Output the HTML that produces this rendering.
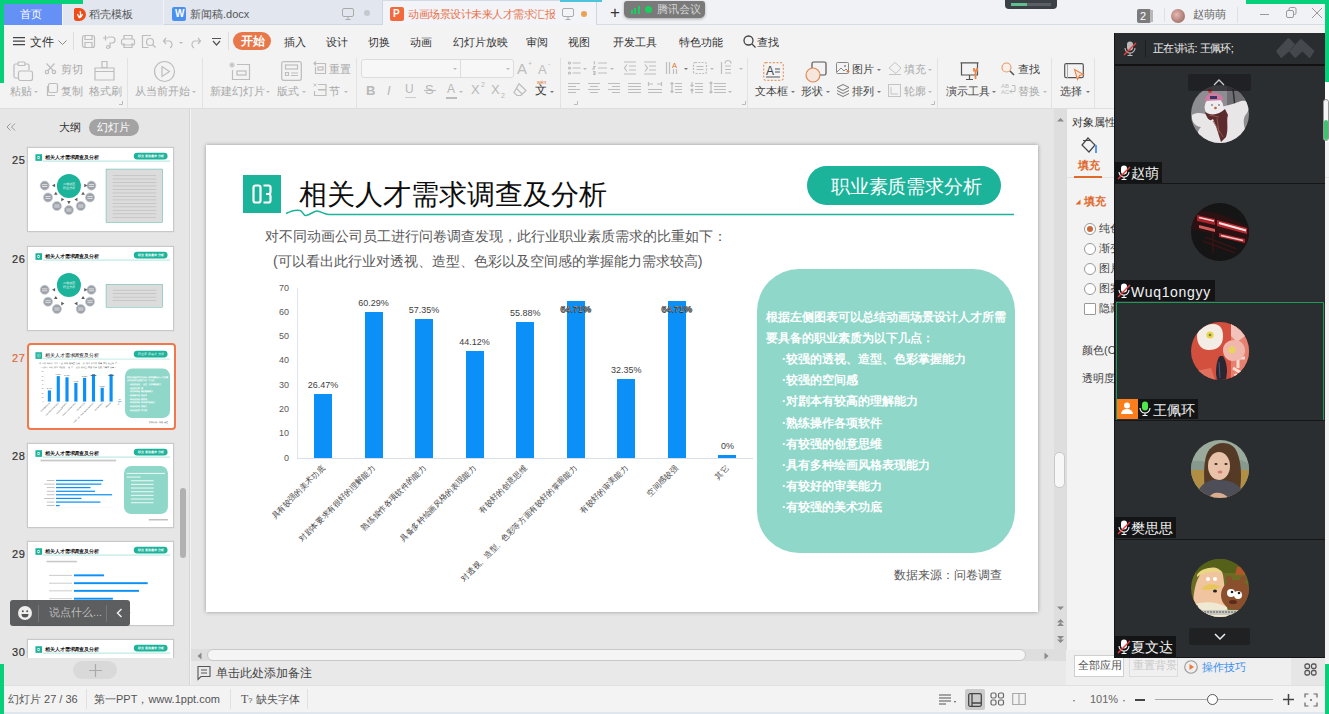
<!DOCTYPE html>
<html><head><meta charset="utf-8">
<style>
*{margin:0;padding:0;box-sizing:border-box}
html,body{width:1329px;height:714px;overflow:hidden;background:#f3f3f3;font-family:"Liberation Sans",sans-serif;position:relative}
.a{position:absolute;white-space:nowrap}
.t{position:absolute;white-space:nowrap;line-height:1}
svg{position:absolute;overflow:visible}
.xl{font-size:7.9px;color:#454545;transform-origin:100% 50%;transform:rotate(-45deg);line-height:10px}
/* tab bar */
#tabbar{left:0;top:0;width:1329px;height:25px;background:#f1f2f6;border-bottom:1px solid #d6dbe4}
.tab{position:absolute;top:0;height:25px}
/* menu */
.mn{font-size:11px;color:#333}
.lbl{font-size:11px;color:#a8a8a8}
.ic{stroke:#bdbdbd;fill:none;stroke-width:1.2}
</style></head><body>

<!-- ============ TAB BAR ============ -->
<div class="a" id="tabbar"></div>
<div class="tab" style="left:0;width:62px;background:#6590f5"></div>
<div class="t" style="left:20px;top:8.5px;font-size:11px;color:#fff">首页</div>
<div class="tab" style="left:62px;width:101px;background:#e1e6ef;border-left:1px solid #f2f4f8"></div>
<div class="a" style="left:74px;top:8px;width:12px;height:13px;background:#f04a18;border-radius:2px 7px 7px 3px"></div><svg style="left:76px;top:10px" width="8" height="9"><path d="M4 1C5 3 5 5 3.5 8M1.5 4C2 6 3 7 3.5 8M6.5 4C6 6 5 7 3.5 8" fill="none" stroke="#fff" stroke-width="1.2"/></svg>
<div class="t" style="left:89px;top:8.5px;font-size:11px;color:#555">稻壳模板</div>
<div class="tab" style="left:163px;width:220px;background:#e1e6ef;border-left:1px solid #f2f4f8;border-bottom:1px solid #cfd6e2"></div>
<div class="a" style="left:172px;top:7px;width:14px;height:14px;background:#4a90f0;border-radius:2px"></div>
<div class="t" style="left:175px;top:9px;font-size:10px;color:#fff;font-weight:bold">W</div>
<div class="t" style="left:190px;top:8.5px;font-size:11px;color:#555">新闻稿.docx</div>
<svg style="left:342px;top:8px" width="12" height="12"><rect x="0.5" y="0.5" width="11" height="8" rx="1.5" fill="none" stroke="#aaa"/><path d="M6 9v2M3.5 11.5h5" stroke="#aaa"/></svg>
<div class="a" style="left:364px;top:10px;width:6px;height:6px;border-radius:50%;background:#c4c8d0"></div>
<div class="tab" style="left:382px;width:215px;background:#f3f4f8;border-top:1px solid #d5dae3;border-left:1px solid #d0d6e0;border-right:1px solid #d0d6e0"></div><div class="a" style="left:560px;top:0;width:42px;height:1.5px;background:#4fc3dc"></div>
<div class="a" style="left:390px;top:7px;width:14px;height:14px;background:#f26a3c;border-radius:2px"></div>
<div class="t" style="left:393px;top:9px;font-size:10px;color:#fff;font-weight:bold">P</div>
<div class="t" style="left:408px;top:8.5px;font-size:11px;letter-spacing:-0.5px;color:#e8734a">动画场景设计未来人才需求汇报</div>
<svg style="left:562px;top:8px" width="12" height="12"><rect x="0.5" y="0.5" width="11" height="8" rx="1.5" fill="none" stroke="#aaa"/><path d="M6 9v2M3.5 11.5h5" stroke="#aaa"/></svg>
<div class="a" style="left:581px;top:11px;width:6px;height:6px;border-radius:50%;background:#eba257"></div>
<div class="t" style="left:610px;top:4px;font-size:17px;color:#333">+</div>
<!-- tencent pill -->
<div class="a" style="left:624px;top:1px;width:81px;height:17px;background:#7a7a7a;border-radius:3px 3px 5px 5px;box-shadow:0 1px 3px rgba(0,0,0,.3)"></div>
<div class="a" style="left:631px;top:10px;width:2px;height:4px;background:#19d05e"></div>
<div class="a" style="left:634px;top:8px;width:2px;height:6px;background:#19d05e"></div>
<div class="a" style="left:638px;top:6px;width:2px;height:8px;background:#19d05e"></div>
<div class="a" style="left:645px;top:6px;width:7px;height:7px;border-radius:50%;background:#19d05e"></div>
<div class="t" style="left:657px;top:4px;font-size:11px;color:#d8d8d8">腾讯会议</div>
<!-- recording device thumb -->
<div class="a" style="left:1005px;top:0;width:52px;height:9px;background:#3b3f46;border-radius:0 0 4px 4px"></div>
<div class="a" style="left:1011px;top:3px;width:16px;height:3px;background:#5fbf8f"></div>
<div class="a" style="left:1027px;top:3px;width:24px;height:3px;background:#5a5f66"></div>
<!-- right tabbar -->
<div class="a" style="left:1137px;top:9px;width:14px;height:14px;background:#7b7b7b;border-radius:2px"></div>
<div class="a" style="left:1150px;top:10px;width:3px;height:12px;background:#b8b8b8"></div>
<div class="t" style="left:1140px;top:11px;font-size:11px;color:#fff">2</div>
<div class="a" style="left:1164px;top:8px;width:1px;height:14px;background:#dcdfe5"></div>
<div class="a" style="left:1171px;top:9px;width:14px;height:14px;border-radius:50%;background:radial-gradient(circle at 40% 40%,#e6b9b0,#8a5a56)"></div>
<div class="t" style="left:1193px;top:9px;font-size:11px;color:#666">赵萌萌</div>
<div class="a" style="left:1237px;top:7px;width:1px;height:16px;background:#dcdfe5"></div>
<div class="a" style="left:1260px;top:14px;width:9px;height:1px;background:#999"></div>
<svg style="left:1286px;top:7px" width="12" height="12"><rect x="0.5" y="3.5" width="7" height="7" rx="1.5" fill="none" stroke="#999"/><path d="M3 3V2a1.5 1.5 0 0 1 1.5-1.5h4A1.5 1.5 0 0 1 10 2v4a1.5 1.5 0 0 1-1.5 1.5H8" fill="none" stroke="#999"/></svg>
<svg style="left:1312px;top:8px" width="10" height="10"><path d="M0 0L10 10M10 0L0 10" stroke="#999" stroke-width="1"/></svg>

<!-- ============ MENU ROW ============ -->
<div class="a" style="left:0;top:25px;width:1329px;height:84px;background:#f3f3f3;border-bottom:1px solid #dedede"></div>
<svg style="left:13px;top:37px" width="12" height="9"><path d="M0 .7h12M0 4.2h12M0 7.7h12" stroke="#444" stroke-width="1.2"/></svg>
<div class="t mn" style="left:30px;top:36.5px;font-size:11.5px;color:#333">文件</div>
<svg style="left:58px;top:40px" width="9" height="6"><path d="M0.5 0.5L4.5 4.5L8.5 0.5" fill="none" stroke="#888"/></svg>
<div class="a" style="left:73px;top:32px;width:1px;height:18px;background:#ddd"></div>
<svg style="left:82px;top:35px" width="13" height="13"><rect x="0.5" y="0.5" width="12" height="12" rx="2" class="ic"/><path d="M3 .5v4h7v-4M3 12.5v-5h7v5" class="ic"/></svg>
<svg style="left:102px;top:35px" width="14" height="14"><path d="M1 3h5M3.5 .5v5M6 2h4a3 3 0 0 1 0 6H8v5" class="ic"/><circle cx="6" cy="12" r="1.5" class="ic"/></svg>
<svg style="left:121px;top:35px" width="14" height="13"><rect x="0.5" y="4" width="13" height="6" rx="2" class="ic"/><path d="M3 4V.5h8V4M3 8v4.5h8V8" class="ic"/></svg>
<svg style="left:142px;top:35px" width="14" height="14"><path d="M9 .5H.5v12h6" class="ic"/><circle cx="8" cy="7" r="3.5" class="ic"/><path d="M10.5 9.5l3 3" class="ic"/></svg>
<svg style="left:163px;top:36px" width="12" height="12"><path d="M3 2L.5 5 3 8M.5 5H7a4 4 0 0 1 0 7" class="ic"/></svg>
<div class="a" style="left:178.5px;top:42.1px;width:0;height:0;border-left:2.0px solid transparent;border-right:2.0px solid transparent;border-top:2.3px solid #bbb"></div>
<svg style="left:189px;top:36px" width="12" height="12"><path d="M9 2l2.5 3L9 8M11.5 5H5a4 4 0 0 0 0 7" class="ic"/></svg>
<svg style="left:212px;top:38px" width="9" height="9"><path d="M0 0.5h9M1 3l3.5 4L8 3" fill="none" stroke="#555" stroke-width="1.2"/></svg>
<div class="a" style="left:228px;top:32px;width:1px;height:18px;background:#ddd"></div>
<div class="a" style="left:233px;top:32px;width:38px;height:18px;background:#e8784a;border-radius:9px"></div>
<div class="t" style="left:241px;top:36px;font-size:11.5px;color:#fff;font-weight:bold">开始</div>
<div class="t mn" style="left:284px;top:36.5px">插入</div>
<div class="t mn" style="left:326px;top:36.5px">设计</div>
<div class="t mn" style="left:368px;top:36.5px">切换</div>
<div class="t mn" style="left:410px;top:36.5px">动画</div>
<div class="t mn" style="left:453px;top:36.5px">幻灯片放映</div>
<div class="t mn" style="left:526px;top:36.5px">审阅</div>
<div class="t mn" style="left:568px;top:36.5px">视图</div>
<div class="t mn" style="left:613px;top:36.5px">开发工具</div>
<div class="t mn" style="left:679px;top:36.5px">特色功能</div>
<svg style="left:743px;top:35px" width="13" height="13"><circle cx="5.5" cy="5.5" r="4.5" fill="none" stroke="#444" stroke-width="1.3"/><path d="M9 9l3.5 3.5" stroke="#444" stroke-width="1.3"/></svg>
<div class="t mn" style="left:757px;top:36.5px">查找</div>

<!-- ============ TOOLBAR ============ -->
<!-- group1 -->
<svg style="left:13px;top:61px" width="20" height="20"><path d="M5 3H2.5A1.5 1.5 0 0 0 1 4.5v11A1.5 1.5 0 0 0 2.5 17H5" class="ic"/><rect x="5" y="1" width="7" height="3.5" rx="1" class="ic"/><path d="M12 3h2.5A1.5 1.5 0 0 1 16 4.5V9" class="ic"/><rect x="5.5" y="10" width="14" height="9.5" rx="2" class="ic"/></svg>
<div class="t lbl" style="left:10px;top:86px">粘贴</div><div class="a" style="left:33.5px;top:91.2px;width:0;height:0;border-left:2.0px solid transparent;border-right:2.0px solid transparent;border-top:2.3px solid #bbb"></div>
<svg style="left:45px;top:63px" width="11" height="11"><circle cx="2" cy="9" r="1.7" class="ic"/><circle cx="9" cy="9" r="1.7" class="ic"/><path d="M3 7.5L9.5 .5M8 7.5L1.5 .5" class="ic"/></svg>
<div class="t lbl" style="left:61px;top:64px">剪切</div>
<svg style="left:45px;top:83px" width="13" height="13"><rect x="3.5" y="0.5" width="9" height="9" rx="1.5" class="ic"/><path d="M2.5 3v9.5H10" class="ic"/></svg>
<div class="t lbl" style="left:61px;top:86px">复制</div>
<svg style="left:94px;top:61px" width="21" height="20"><path d="M8 .5h5v6H8z" class="ic"/><path d="M1 7h19v12H1zM1 10.5h19" class="ic"/></svg>
<div class="t lbl" style="left:89px;top:86px">格式刷</div>
<svg style="left:119px;top:101px" width="4" height="4"><path d="M0 3.5h3.5V0" fill="none" stroke="#bbb"/></svg>
<div class="a" style="left:127px;top:58px;width:1px;height:50px;background:#e2e2e2"></div>
<!-- group2 -->
<svg style="left:153px;top:60px" width="23" height="23"><circle cx="11.5" cy="11.5" r="10" class="ic" stroke-width="1.4"/><path d="M9 6.5v10l7.5-5z" class="ic" stroke-width="1.3"/></svg>
<div class="t lbl" style="left:135px;top:86px">从当前开始</div><div class="a" style="left:191.5px;top:91.2px;width:0;height:0;border-left:2.0px solid transparent;border-right:2.0px solid transparent;border-top:2.3px solid #bbb"></div>
<div class="a" style="left:202px;top:58px;width:1px;height:50px;background:#e2e2e2"></div>
<!-- group3 -->
<svg style="left:229px;top:62px" width="22" height="19"><path d="M1 1l4 4M5 1L1 5M3 0v6M0 3h6" stroke="#bbb" stroke-width="0.9"/><path d="M8 2.5h12.5v15h-17V8" class="ic" stroke-width="1.4"/><rect x="8" y="9" width="9" height="4" class="ic"/></svg>
<div class="t lbl" style="left:210px;top:86px">新建幻灯片</div><div class="a" style="left:265.5px;top:91.2px;width:0;height:0;border-left:2.0px solid transparent;border-right:2.0px solid transparent;border-top:2.3px solid #bbb"></div>
<svg style="left:281px;top:61px" width="21" height="20"><rect x="0.7" y="0.7" width="19.6" height="18.6" rx="2" class="ic" stroke-width="1.4"/><rect x="4.5" y="4" width="12" height="4" class="ic"/><path d="M4.5 11.5h3v3h-3zM10 12h7M10 14.5h7" class="ic"/></svg>
<div class="t lbl" style="left:277px;top:86px">版式</div><div class="a" style="left:301.5px;top:91.2px;width:0;height:0;border-left:2.0px solid transparent;border-right:2.0px solid transparent;border-top:2.3px solid #bbb"></div>
<svg style="left:313px;top:61px" width="14" height="14"><path d="M3 .5L1 2.5 3 4.5M1 2.5h11.5v10h-10V6" class="ic"/><rect x="5" y="6" width="5" height="3" class="ic"/></svg>
<div class="t lbl" style="left:329px;top:64px">重置</div>
<svg style="left:313px;top:83px" width="14" height="14"><path d="M.5 .5l3 3M3.5 .5l-3 3" stroke="#bbb" stroke-width=".8"/><path d="M5 1.5h8v5H5M5 7h8v5.5H1.5V8" class="ic"/></svg>
<div class="t lbl" style="left:329px;top:86px">节</div><div class="a" style="left:343.5px;top:91.2px;width:0;height:0;border-left:2.0px solid transparent;border-right:2.0px solid transparent;border-top:2.3px solid #bbb"></div>
<div class="a" style="left:356px;top:58px;width:1px;height:50px;background:#e2e2e2"></div>
<!-- group4 font -->
<div class="a" style="left:361px;top:59px;width:153px;height:19px;background:#f7f7f7;border:1px solid #dcdcdc;border-radius:3px"></div>
<div class="a" style="left:460px;top:60px;width:1px;height:17px;background:#dcdcdc"></div>
<div class="a" style="left:452.5px;top:68.2px;width:0;height:0;border-left:2.0px solid transparent;border-right:2.0px solid transparent;border-top:2.3px solid #bbb"></div>
<div class="a" style="left:505.5px;top:68.2px;width:0;height:0;border-left:2.0px solid transparent;border-right:2.0px solid transparent;border-top:2.3px solid #bbb"></div>
<div class="t" style="left:517px;top:61px;font-size:15px;color:#bcbcbc">A</div><div class="t" style="left:528px;top:60px;font-size:7px;color:#bcbcbc">+</div>
<div class="t" style="left:538px;top:63px;font-size:13px;color:#bcbcbc">A</div><div class="t" style="left:548px;top:60px;font-size:7px;color:#bcbcbc">-</div>
<div class="t" style="left:366px;top:84px;font-size:13px;color:#b8b8b8;font-weight:bold">B</div>
<div class="t" style="left:387px;top:84px;font-size:13px;color:#b8b8b8;font-style:italic">I</div>
<div class="t" style="left:405px;top:83px;font-size:12px;color:#b8b8b8">U</div><div class="a" style="left:405px;top:97px;width:11px;height:1px;background:#ccc"></div>
<div class="t" style="left:425px;top:83px;font-size:13px;color:#b8b8b8">S</div><div class="a" style="left:424px;top:90px;width:12px;height:1px;background:#bbb"></div>
<div class="t" style="left:447px;top:83px;font-size:12px;color:#b8b8b8">A</div><div class="a" style="left:446px;top:97px;width:11px;height:1.5px;background:#bbb"></div><div class="a" style="left:458.5px;top:91.2px;width:0;height:0;border-left:2.0px solid transparent;border-right:2.0px solid transparent;border-top:2.3px solid #bbb"></div>
<div class="t" style="left:471px;top:83px;font-size:13px;color:#b8b8b8">X</div><div class="t" style="left:481px;top:81px;font-size:7px;color:#b8b8b8">2</div>
<div class="t" style="left:491px;top:83px;font-size:13px;color:#b8b8b8">X</div><div class="t" style="left:501px;top:92px;font-size:7px;color:#b8b8b8">2</div>
<svg style="left:513px;top:83px" width="14" height="14"><path d="M6 .8L13 7.5 8 12.5H4L1 9.5z M3.5 5.5l6 6" class="ic"/></svg>
<div class="t" style="left:535px;top:84px;font-size:12px;color:#333">文</div><div class="t" style="left:537px;top:80px;font-size:5px;color:#e0702a">wén</div><div class="a" style="left:549.5px;top:91.2px;width:0;height:0;border-left:2.0px solid transparent;border-right:2.0px solid transparent;border-top:2.3px solid #777"></div>
<svg style="left:574px;top:101px" width="4" height="4"><path d="M0 3.5h3.5V0" fill="none" stroke="#bbb"/></svg>
<div class="a" style="left:560px;top:58px;width:1px;height:50px;background:#e2e2e2"></div>
<!-- group5 paragraph -->
<svg style="left:568px;top:61px" width="200" height="40">
 <g class="ic" stroke-width="1.1">
  <circle cx="1.5" cy="2" r="1"/><circle cx="1.5" cy="7" r="1"/><circle cx="1.5" cy="12" r="1"/><path d="M4.5 2h8M4.5 7h8M4.5 12h8"/>
  <path d="M30 2h9M30 7h9M30 12h9M25.5 1h1v2.5M25 5.5h2l-2 2.5h2M25 10.5h2v3h-2M25 12h2"/>
  <path d="M56 1h12M61 5h7M61 9h7M56 13h12M59 3.5l-2.5 3.5L59 10.5"/>
  <path d="M76 1h12M81 5h7M81 9h7M76 13h12M77 3.5l2.5 3.5L77 10.5"/>
  <path d="M98.5 1v12M101.5 1v12M105.5 8v5M108.5 8v5"/>
  <rect x="125.5" y="1.5" width="13" height="11" rx="1.5" stroke-dasharray="2 1.3"/><path d="M128.5 5.5h7M128.5 8.5h7"/>
  <path d="M153.5 1v12M157 2.5a3 3 0 0 1 6 0M157 5h6M157 8.5h6M157 12h6"/>
 </g>
 <text x="104" y="7" font-size="7.5" fill="#e0702a" font-family="Liberation Sans">A</text>
 <g class="ic" stroke-width="1.1">
  <path d="M0 22.5h12M0 25.5h8M0 28.5h12M0 31.5h8"/>
  <path d="M20 22.5h12M22 25.5h8M20 28.5h12M22 31.5h8"/>
  <path d="M40 22.5h12M44 25.5h8M40 28.5h12M44 31.5h8"/>
  <path d="M60 22.5h13M60 25.5h13M60 28.5h13M60 31.5h13"/>
  <path d="M80.5 21v4M93.5 21v4M81 23h4M89 23h4M80 28.5h14M80 31.5h14"/>
  <path d="M107 22.5h7M107 25.5h7M107 28.5h7M107 31.5h7M104 21.5v10M102.5 23l1.5-1.5 1.5 1.5M102.5 30l1.5 1.5 1.5-1.5"/>
  <path d="M127 22.5h8M127 25.5h8M127 28.5h8M127 31.5h8M124 21v4.5M124 28v4.5M122.5 24l1.5 1.5 1.5-1.5M122.5 29.5l1.5-1.5 1.5 1.5"/>
  <path d="M146 22.5h12M146 25.5h12M146 28.5h12M146 31.5h12M143 21v11M141.5 22.5l1.5-1.5 1.5 1.5M141.5 30.5l1.5 1.5 1.5-1.5"/>
 </g>
</svg>
<div class="a" style="left:582.5px;top:68.2px;width:0;height:0;border-left:2.0px solid transparent;border-right:2.0px solid transparent;border-top:2.3px solid #bbb"></div>
<div class="a" style="left:609.5px;top:68.2px;width:0;height:0;border-left:2.0px solid transparent;border-right:2.0px solid transparent;border-top:2.3px solid #bbb"></div>
<div class="a" style="left:683.5px;top:68.2px;width:0;height:0;border-left:2.0px solid transparent;border-right:2.0px solid transparent;border-top:2.3px solid #777"></div>
<div class="a" style="left:709.5px;top:68.2px;width:0;height:0;border-left:2.0px solid transparent;border-right:2.0px solid transparent;border-top:2.3px solid #bbb"></div>
<div class="a" style="left:738.5px;top:68.2px;width:0;height:0;border-left:2.0px solid transparent;border-right:2.0px solid transparent;border-top:2.3px solid #bbb"></div>
<div class="a" style="left:727.5px;top:91.2px;width:0;height:0;border-left:2.0px solid transparent;border-right:2.0px solid transparent;border-top:2.3px solid #bbb"></div>
<svg style="left:742px;top:101px" width="4" height="4"><path d="M0 3.5h3.5V0" fill="none" stroke="#bbb"/></svg>
<div class="a" style="left:747px;top:58px;width:1px;height:50px;background:#e2e2e2"></div>
<!-- group6 -->
<svg style="left:763px;top:62px" width="21" height="19"><rect x="0.7" y="0.7" width="19.6" height="17.6" rx="2" fill="none" stroke="#e59a6a" stroke-dasharray="2 1.6" stroke-width="1.2"/><text x="3" y="13" font-size="12" fill="#444" font-family="Liberation Sans">A</text><path d="M12 7h5M12 10h5M3 15h14" stroke="#555" stroke-width="1"/></svg>
<div class="t" style="left:755px;top:86px;font-size:11px;color:#444">文本框</div><div class="a" style="left:790.5px;top:91.2px;width:0;height:0;border-left:2.0px solid transparent;border-right:2.0px solid transparent;border-top:2.3px solid #777"></div>
<svg style="left:805px;top:61px" width="22" height="22"><rect x="7" y="1" width="14" height="13" rx="1.5" fill="none" stroke="#555" stroke-width="1.2"/><circle cx="8" cy="14" r="7" fill="#f7e6dc" stroke="#e08a5a" stroke-width="1.2"/></svg>
<div class="t" style="left:801px;top:86px;font-size:11px;color:#444">形状</div><div class="a" style="left:825.5px;top:91.2px;width:0;height:0;border-left:2.0px solid transparent;border-right:2.0px solid transparent;border-top:2.3px solid #777"></div>
<svg style="left:836px;top:62px" width="14" height="13"><rect x="0.5" y="0.5" width="12" height="11" rx="1" fill="none" stroke="#888"/><path d="M1 10l4-4 3 3 2-2 2 2" fill="none" stroke="#888"/><circle cx="9" cy="4" r="1" fill="#888"/><path d="M10.5 9.5h3M12 8v3" stroke="#e07a3a"/></svg>
<div class="t" style="left:852px;top:64px;font-size:11px;color:#444">图片</div><div class="a" style="left:876.5px;top:69.2px;width:0;height:0;border-left:2.0px solid transparent;border-right:2.0px solid transparent;border-top:2.3px solid #777"></div>
<svg style="left:888px;top:62px" width="14" height="13"><path d="M7 .5L13 6 8 11.5 1 6z M1 12.5h12" fill="none" stroke="#c4c4c4"/></svg>
<div class="t lbl" style="left:904px;top:64px">填充</div><div class="a" style="left:927.5px;top:69.2px;width:0;height:0;border-left:2.0px solid transparent;border-right:2.0px solid transparent;border-top:2.3px solid #bbb"></div>
<svg style="left:836px;top:84px" width="14" height="13"><path d="M7 .5l6 3-6 3-6-3z M1 6.5l6 3 6-3M1 9.5l6 3 6-3" fill="none" stroke="#777"/></svg>
<div class="t" style="left:852px;top:86px;font-size:11px;color:#444">排列</div><div class="a" style="left:876.5px;top:91.2px;width:0;height:0;border-left:2.0px solid transparent;border-right:2.0px solid transparent;border-top:2.3px solid #777"></div>
<svg style="left:888px;top:84px" width="14" height="13"><rect x="0.5" y="0.5" width="12" height="12" fill="none" stroke="#c4c4c4"/><path d="M3 3v7h7" fill="none" stroke="#c4c4c4"/></svg>
<div class="t lbl" style="left:904px;top:86px">轮廓</div><div class="a" style="left:927.5px;top:91.2px;width:0;height:0;border-left:2.0px solid transparent;border-right:2.0px solid transparent;border-top:2.3px solid #bbb"></div>
<svg style="left:931px;top:101px" width="4" height="4"><path d="M0 3.5h3.5V0" fill="none" stroke="#bbb"/></svg>
<div class="a" style="left:937px;top:58px;width:1px;height:50px;background:#e2e2e2"></div>
<!-- group7 -->
<svg style="left:960px;top:62px" width="20" height="19"><path d="M.5 .8h18M1.5 1v12h16V1M9.5 13v4M6 17.5h7" fill="none" stroke="#555" stroke-width="1.2"/><path d="M14 6v2.5h3V6M15.5 9v8" fill="none" stroke="#e9874c" stroke-width="1.8"/></svg>
<div class="t" style="left:946px;top:86px;font-size:11px;color:#444">演示工具</div><div class="a" style="left:991.5px;top:91.2px;width:0;height:0;border-left:2.0px solid transparent;border-right:2.0px solid transparent;border-top:2.3px solid #777"></div>
<svg style="left:1001px;top:62px" width="14" height="14"><circle cx="5.5" cy="5.5" r="4.5" fill="#fbefe8" stroke="#e59a6a" stroke-width="1.1"/><path d="M9 9l4 4" stroke="#555" stroke-width="1.6"/></svg>
<div class="t" style="left:1018px;top:64px;font-size:11px;color:#444">查找</div>
<div class="t" style="left:1001px;top:83px;font-size:6px;color:#bbb;line-height:6px">AB<br>AC</div>
<svg style="left:1009px;top:85px" width="7" height="9"><path d="M3 .5h3v6H1M3 4.5l-2 2 2 2" fill="none" stroke="#bbb"/></svg>
<div class="t lbl" style="left:1018px;top:86px">替换</div><div class="a" style="left:1042.5px;top:91.2px;width:0;height:0;border-left:2.0px solid transparent;border-right:2.0px solid transparent;border-top:2.3px solid #bbb"></div>
<div class="a" style="left:1051px;top:58px;width:1px;height:50px;background:#e2e2e2"></div>
<!-- group8 -->
<svg style="left:1064px;top:63px" width="22" height="19"><rect x="0.7" y="0.7" width="18.6" height="14" rx="1.5" fill="none" stroke="#555" stroke-width="1.2"/><path d="M3.5 1v14" stroke="#aaa"/><path d="M10.5 6.5l9 5-4 1-2 4z" fill="#f7e6dc" stroke="#e9874c" stroke-width="1.1"/></svg>
<div class="t" style="left:1060px;top:86px;font-size:11px;color:#444">选择</div><div class="a" style="left:1085.5px;top:91.2px;width:0;height:0;border-left:2.0px solid transparent;border-right:2.0px solid transparent;border-top:2.3px solid #777"></div>
<div class="a" style="left:1094px;top:58px;width:1px;height:50px;background:#e2e2e2"></div>


<div class="a" style="left:0;top:109px;width:190px;height:576px;background:#e6e6e6;border-right:1px solid #d6d6d6"></div>
<svg style="left:6px;top:123px" width="10" height="8"><path d="M4.5 .5L1 4l3.5 3.5M9 .5L5.5 4 9 7.5" fill="none" stroke="#999" stroke-width="1"/></svg>
<div class="t" style="left:59px;top:122px;font-size:11px;color:#333">大纲</div>
<div class="a" style="left:89px;top:119px;width:50px;height:17px;border-radius:9px;background:#a3a3a3"></div>
<div class="t" style="left:97px;top:122px;font-size:11px;color:#fff">幻灯片</div>
<div class="a" style="left:0;top:140px;width:190px;height:518px;overflow:hidden">
<div class="a" style="left:27px;top:7px;width:147px;height:85px;border:1px solid #c9c9c9;background:#fff;box-shadow:0 0 1px rgba(0,0,0,.15)"></div>
<div class="a" style="left:29px;top:9px;width:832px;height:467px;transform:scale(.1743);transform-origin:0 0;overflow:hidden"><div class="a" style="left:37px;top:30px;width:38px;height:38px;background:#1bb39a"></div><div class="a" style="left:49px;top:40px;width:14px;height:18px;border:3px solid #fff"></div><div class="t" style="left:93px;top:33px;font-size:28px;color:#000;font-weight:bold">相关人才需求调查及分析</div><div class="a" style="left:80px;top:68px;width:730px;height:2px;background:#1bb39a"></div><div class="a" style="left:601px;top:21px;width:194px;height:39px;background:#1bb39a;border-radius:20px"></div><div class="t" style="left:625px;top:30px;font-size:19px;color:#fff;font-weight:bold">职业素质需求分析</div><div class="a" style="left:160px;top:143px;width:138px;height:138px;border-radius:50%;background:#1bb39a"></div>
<div class="t" style="left:179px;top:190px;font-size:16px;color:#fff;line-height:22px;text-align:center;width:100px;white-space:normal">二维动画<br>职业分析</div>
<div class="a" style="left:62px;top:182px;width:56px;height:56px;border-radius:50%;background:#9da2aa;border:4px solid #c4c9cf"></div>
<div class="a" style="left:81px;top:250px;width:56px;height:56px;border-radius:50%;background:#9da2aa;border:4px solid #c4c9cf"></div>
<div class="a" style="left:132px;top:299px;width:56px;height:56px;border-radius:50%;background:#9da2aa;border:4px solid #c4c9cf"></div>
<div class="a" style="left:201px;top:322px;width:56px;height:56px;border-radius:50%;background:#9da2aa;border:4px solid #c4c9cf"></div>
<div class="a" style="left:269px;top:299px;width:56px;height:56px;border-radius:50%;background:#9da2aa;border:4px solid #c4c9cf"></div>
<div class="a" style="left:322px;top:250px;width:56px;height:56px;border-radius:50%;background:#9da2aa;border:4px solid #c4c9cf"></div>
<div class="a" style="left:330px;top:182px;width:56px;height:56px;border-radius:50%;background:#9da2aa;border:4px solid #c4c9cf"></div>
<svg style="left:130px;top:198px;transform:rotate(0deg)" width="24" height="24"><path d="M2 12L20 2V22z" fill="#5a5a5a"/></svg>
<svg style="left:313px;top:198px;transform:rotate(180deg)" width="24" height="24"><path d="M2 12L20 2V22z" fill="#5a5a5a"/></svg>
<svg style="left:140px;top:246px;transform:rotate(-30deg)" width="24" height="24"><path d="M2 12L20 2V22z" fill="#5a5a5a"/></svg>
<svg style="left:178px;top:279px;transform:rotate(-60deg)" width="24" height="24"><path d="M2 12L20 2V22z" fill="#5a5a5a"/></svg>
<svg style="left:217px;top:295px;transform:rotate(-90deg)" width="24" height="24"><path d="M2 12L20 2V22z" fill="#5a5a5a"/></svg>
<svg style="left:261px;top:279px;transform:rotate(-120deg)" width="24" height="24"><path d="M2 12L20 2V22z" fill="#5a5a5a"/></svg>
<svg style="left:300px;top:246px;transform:rotate(-150deg)" width="24" height="24"><path d="M2 12L20 2V22z" fill="#5a5a5a"/></svg>
<div class="a" style="left:75px;top:202px;width:30px;height:5px;background:#e8e8e8"></div><div class="a" style="left:75px;top:213px;width:30px;height:5px;background:#e8e8e8"></div>
<div class="a" style="left:94px;top:270px;width:30px;height:5px;background:#e8e8e8"></div><div class="a" style="left:94px;top:281px;width:30px;height:5px;background:#e8e8e8"></div>
<div class="a" style="left:145px;top:319px;width:30px;height:5px;background:#e8e8e8"></div><div class="a" style="left:145px;top:330px;width:30px;height:5px;background:#e8e8e8"></div>
<div class="a" style="left:214px;top:342px;width:30px;height:5px;background:#e8e8e8"></div><div class="a" style="left:214px;top:353px;width:30px;height:5px;background:#e8e8e8"></div>
<div class="a" style="left:282px;top:319px;width:30px;height:5px;background:#e8e8e8"></div><div class="a" style="left:282px;top:330px;width:30px;height:5px;background:#e8e8e8"></div>
<div class="a" style="left:335px;top:270px;width:30px;height:5px;background:#e8e8e8"></div><div class="a" style="left:335px;top:281px;width:30px;height:5px;background:#e8e8e8"></div>
<div class="a" style="left:343px;top:202px;width:30px;height:5px;background:#e8e8e8"></div><div class="a" style="left:343px;top:213px;width:30px;height:5px;background:#e8e8e8"></div>
<div class="a" style="left:441px;top:114px;width:327px;height:309px;background:#dcdcdc;border:2px solid #1bb39a"></div>
<div class="a" style="left:480px;top:150px;width:250px;height:4px;background:#bdbdbd"></div>
<div class="a" style="left:480px;top:170px;width:250px;height:4px;background:#bdbdbd"></div>
<div class="a" style="left:480px;top:190px;width:250px;height:4px;background:#bdbdbd"></div>
<div class="a" style="left:480px;top:210px;width:250px;height:4px;background:#bdbdbd"></div>
<div class="a" style="left:480px;top:230px;width:250px;height:4px;background:#bdbdbd"></div>
<div class="a" style="left:480px;top:250px;width:250px;height:4px;background:#bdbdbd"></div>
<div class="a" style="left:480px;top:270px;width:250px;height:4px;background:#bdbdbd"></div>
<div class="a" style="left:480px;top:290px;width:250px;height:4px;background:#bdbdbd"></div>
<div class="a" style="left:480px;top:310px;width:250px;height:4px;background:#bdbdbd"></div>
<div class="a" style="left:480px;top:330px;width:250px;height:4px;background:#bdbdbd"></div>
<div class="a" style="left:480px;top:350px;width:250px;height:4px;background:#bdbdbd"></div>
<div class="a" style="left:480px;top:370px;width:250px;height:4px;background:#bdbdbd"></div>
<div class="a" style="left:480px;top:390px;width:250px;height:4px;background:#bdbdbd"></div></div>
<div class="t" style="left:12px;top:15px;font-size:11px;color:#333;letter-spacing:.6px;-webkit-text-stroke:.2px #333">25</div>
<div class="a" style="left:27px;top:106px;width:147px;height:85px;border:1px solid #c9c9c9;background:#fff;box-shadow:0 0 1px rgba(0,0,0,.15)"></div>
<div class="a" style="left:29px;top:108px;width:832px;height:467px;transform:scale(.1743);transform-origin:0 0;overflow:hidden"><div class="a" style="left:37px;top:30px;width:38px;height:38px;background:#1bb39a"></div><div class="a" style="left:49px;top:40px;width:14px;height:18px;border:3px solid #fff"></div><div class="t" style="left:93px;top:33px;font-size:28px;color:#000;font-weight:bold">相关人才需求调查及分析</div><div class="a" style="left:80px;top:68px;width:730px;height:2px;background:#1bb39a"></div><div class="a" style="left:601px;top:21px;width:194px;height:39px;background:#1bb39a;border-radius:20px"></div><div class="t" style="left:625px;top:30px;font-size:19px;color:#fff;font-weight:bold">职业素质需求分析</div><div class="a" style="left:160px;top:143px;width:138px;height:138px;border-radius:50%;background:#1bb39a"></div>
<div class="t" style="left:179px;top:190px;font-size:16px;color:#fff;line-height:22px;text-align:center;width:100px;white-space:normal">二维动画<br>职业分析</div>
<div class="a" style="left:62px;top:212px;width:56px;height:56px;border-radius:50%;background:#9da2aa;border:4px solid #c4c9cf"></div>
<div class="a" style="left:81px;top:280px;width:56px;height:56px;border-radius:50%;background:#9da2aa;border:4px solid #c4c9cf"></div>
<div class="a" style="left:132px;top:322px;width:56px;height:56px;border-radius:50%;background:#9da2aa;border:4px solid #c4c9cf"></div>
<div class="a" style="left:269px;top:322px;width:56px;height:56px;border-radius:50%;background:#9da2aa;border:4px solid #c4c9cf"></div>
<div class="a" style="left:322px;top:280px;width:56px;height:56px;border-radius:50%;background:#9da2aa;border:4px solid #c4c9cf"></div>
<div class="a" style="left:330px;top:212px;width:56px;height:56px;border-radius:50%;background:#9da2aa;border:4px solid #c4c9cf"></div>
<svg style="left:130px;top:228px;transform:rotate(0deg)" width="24" height="24"><path d="M2 12L20 2V22z" fill="#5a5a5a"/></svg>
<svg style="left:313px;top:228px;transform:rotate(180deg)" width="24" height="24"><path d="M2 12L20 2V22z" fill="#5a5a5a"/></svg>
<svg style="left:140px;top:276px;transform:rotate(-30deg)" width="24" height="24"><path d="M2 12L20 2V22z" fill="#5a5a5a"/></svg>
<svg style="left:178px;top:309px;transform:rotate(-60deg)" width="24" height="24"><path d="M2 12L20 2V22z" fill="#5a5a5a"/></svg>
<svg style="left:261px;top:309px;transform:rotate(-120deg)" width="24" height="24"><path d="M2 12L20 2V22z" fill="#5a5a5a"/></svg>
<svg style="left:300px;top:276px;transform:rotate(-150deg)" width="24" height="24"><path d="M2 12L20 2V22z" fill="#5a5a5a"/></svg>
<div class="a" style="left:75px;top:232px;width:30px;height:5px;background:#e8e8e8"></div><div class="a" style="left:75px;top:243px;width:30px;height:5px;background:#e8e8e8"></div>
<div class="a" style="left:94px;top:300px;width:30px;height:5px;background:#e8e8e8"></div><div class="a" style="left:94px;top:311px;width:30px;height:5px;background:#e8e8e8"></div>
<div class="a" style="left:145px;top:342px;width:30px;height:5px;background:#e8e8e8"></div><div class="a" style="left:145px;top:353px;width:30px;height:5px;background:#e8e8e8"></div>
<div class="a" style="left:282px;top:342px;width:30px;height:5px;background:#e8e8e8"></div><div class="a" style="left:282px;top:353px;width:30px;height:5px;background:#e8e8e8"></div>
<div class="a" style="left:335px;top:300px;width:30px;height:5px;background:#e8e8e8"></div><div class="a" style="left:335px;top:311px;width:30px;height:5px;background:#e8e8e8"></div>
<div class="a" style="left:343px;top:232px;width:30px;height:5px;background:#e8e8e8"></div><div class="a" style="left:343px;top:243px;width:30px;height:5px;background:#e8e8e8"></div>
<div class="a" style="left:441px;top:207px;width:327px;height:134px;background:#dcdcdc;border:2px solid #1bb39a"></div>
<div class="a" style="left:480px;top:240px;width:250px;height:4px;background:#bdbdbd"></div>
<div class="a" style="left:480px;top:260px;width:250px;height:4px;background:#bdbdbd"></div>
<div class="a" style="left:480px;top:280px;width:250px;height:4px;background:#bdbdbd"></div>
<div class="a" style="left:480px;top:300px;width:250px;height:4px;background:#bdbdbd"></div></div>
<div class="t" style="left:12px;top:114px;font-size:11px;color:#333;letter-spacing:.6px;-webkit-text-stroke:.2px #333">26</div>
<div class="a" style="left:27px;top:203px;width:149px;height:87px;border:2.5px solid #f0784a;border-radius:4px;background:#fff"></div>
<div class="a" style="left:29px;top:207px;width:832px;height:467px;transform:scale(.1743);transform-origin:0 0;overflow:hidden"><div class="a" style="left:37px;top:30px;width:38px;height:38px;background:#1bb39a"></div>
<svg style="left:46px;top:39px" width="22" height="21"><path d="M3.5 1.5h3a2 2 0 0 1 2 2v13a2 2 0 0 1-2 2h-3a2 2 0 0 1-2-2v-13a2 2 0 0 1 2-2z" fill="none" stroke="#fff" stroke-width="2.2"/><path d="M11.5 1.5h5a2 2 0 0 1 2 2v4.5a2 2 0 0 1-1.5 2a2 2 0 0 1 1.5 2v4.5a2 2 0 0 1-2 2h-5M14 10h3" fill="none" stroke="#fff" stroke-width="2.2"/></svg>
<div class="t" style="left:93px;top:35.5px;font-size:28px;color:#0d0d0d">相关人才需求调查及分析</div>
<svg style="left:78px;top:60px" width="740" height="16"><path d="M2 8.5C6 6.5 12 4.5 16 5.5 C19 6 19 11 22 10.5 C26 10 30 6 33 6 C37 6 40 9.5 45 9.5 L 730 9.5" fill="none" stroke="#1bb39a" stroke-width="1.6"/></svg>
<div class="a" style="left:601px;top:21px;width:194px;height:39px;background:#1bb39a;border-radius:20px"></div>
<div class="t" style="left:625px;top:32px;font-size:19px;color:#fff;letter-spacing:-0.2px">职业素质需求分析</div>
<div class="t" style="left:59px;top:84px;font-size:14.3px;color:#595959">对不同动画公司员工进行问卷调查发现，此行业职业素质需求的比重如下：</div>
<div class="t" style="left:67px;top:109px;font-size:14.3px;color:#595959">(可以看出此行业对透视、造型、色彩以及空间感的掌握能力需求较高)</div>
<div class="a" style="left:91px;top:143px;width:1px;height:170px;background:#dfe3ee"></div>
<div class="a" style="left:91px;top:313px;width:456px;height:1px;background:#d9deea"></div>
<div class="t" style="right:749px;top:138.5px;font-size:9px;color:#595959">70</div>
<div class="t" style="right:749px;top:162.8px;font-size:9px;color:#595959">60</div>
<div class="t" style="right:749px;top:187.1px;font-size:9px;color:#595959">50</div>
<div class="t" style="right:749px;top:211.4px;font-size:9px;color:#595959">40</div>
<div class="t" style="right:749px;top:235.6px;font-size:9px;color:#595959">30</div>
<div class="t" style="right:749px;top:259.9px;font-size:9px;color:#595959">20</div>
<div class="t" style="right:749px;top:284.2px;font-size:9px;color:#595959">10</div>
<div class="t" style="right:749px;top:308.5px;font-size:9px;color:#595959">0</div>
<div class="a" style="left:108.0px;top:248.7px;width:18px;height:64.3px;background:#0a90f6"></div>
<div class="t" style="left:87.0px;top:235.7px;width:60px;text-align:center;font-size:9px;color:#404040">26.47%</div>
<div class="t xl" style="right:714.5px;top:316.5px">具有较强的美术功底</div>
<div class="a" style="left:158.6px;top:166.6px;width:18px;height:146.4px;background:#0a90f6"></div>
<div class="t" style="left:137.6px;top:153.6px;width:60px;text-align:center;font-size:9px;color:#404040">60.29%</div>
<div class="t xl" style="right:664.0px;top:316.5px">对剧本要求有很好的理解能力</div>
<div class="a" style="left:209.1px;top:173.7px;width:18px;height:139.3px;background:#0a90f6"></div>
<div class="t" style="left:188.1px;top:160.7px;width:60px;text-align:center;font-size:9px;color:#404040">57.35%</div>
<div class="t xl" style="right:613.4px;top:316.5px">熟练操作各项软件的能力</div>
<div class="a" style="left:259.6px;top:205.9px;width:18px;height:107.1px;background:#0a90f6"></div>
<div class="t" style="left:238.6px;top:192.9px;width:60px;text-align:center;font-size:9px;color:#404040">44.12%</div>
<div class="t xl" style="right:562.9px;top:316.5px">具备多种绘画风格的表现能力</div>
<div class="a" style="left:310.2px;top:177.3px;width:18px;height:135.7px;background:#0a90f6"></div>
<div class="t" style="left:289.2px;top:164.3px;width:60px;text-align:center;font-size:9px;color:#404040">55.88%</div>
<div class="t xl" style="right:512.3px;top:316.5px">有较好的创意思维</div>
<div class="a" style="left:360.8px;top:155.8px;width:18px;height:157.2px;background:#0a90f6"></div>
<div class="t" style="left:339.8px;top:160.3px;width:60px;text-align:center;font-size:9px;color:#9aa0a6;text-shadow:0.5px 0 0 #333,-0.5px 0 0 #333,0 0.5px 0 #333,0 -0.5px 0 #333">64.71%</div>
<div class="t xl" style="right:461.8px;top:316.5px">对透视、造型、色彩等方面有较好的掌握能力</div>
<div class="a" style="left:411.3px;top:234.4px;width:18px;height:78.6px;background:#0a90f6"></div>
<div class="t" style="left:390.3px;top:221.4px;width:60px;text-align:center;font-size:9px;color:#404040">32.35%</div>
<div class="t xl" style="right:411.2px;top:316.5px">有较好的审美能力</div>
<div class="a" style="left:461.8px;top:155.8px;width:18px;height:157.2px;background:#0a90f6"></div>
<div class="t" style="left:440.8px;top:160.3px;width:60px;text-align:center;font-size:9px;color:#9aa0a6;text-shadow:0.5px 0 0 #333,-0.5px 0 0 #333,0 0.5px 0 #333,0 -0.5px 0 #333">64.71%</div>
<div class="t xl" style="right:360.7px;top:316.5px">空间感较强</div>
<div class="a" style="left:512.4px;top:309.5px;width:18px;height:3.5px;background:#0a90f6"></div>
<div class="t" style="left:491.4px;top:296.5px;width:60px;text-align:center;font-size:9px;color:#404040">0%</div>
<div class="t xl" style="right:310.1px;top:316.5px">其它</div>
<div class="a" style="left:551px;top:124px;width:258px;height:284px;background:#8fd7c9;border-radius:42px"></div>
<div class="t" style="left:560px;top:166.0px;font-size:12px;color:#fff;font-weight:bold">根据左侧图表可以总结动画场景设计人才所需</div>
<div class="t" style="left:560px;top:187.1px;font-size:12px;color:#fff;font-weight:bold">要具备的职业素质为以下几点：</div>
<div class="t" style="left:576px;top:208.2px;font-size:12px;color:#fff;font-weight:bold">·较强的透视、造型、色彩掌握能力</div>
<div class="t" style="left:576px;top:229.3px;font-size:12px;color:#fff;font-weight:bold">·较强的空间感</div>
<div class="t" style="left:576px;top:250.4px;font-size:12px;color:#fff;font-weight:bold">·对剧本有较高的理解能力</div>
<div class="t" style="left:576px;top:271.5px;font-size:12px;color:#fff;font-weight:bold">·熟练操作各项软件</div>
<div class="t" style="left:576px;top:292.6px;font-size:12px;color:#fff;font-weight:bold">·有较强的创意思维</div>
<div class="t" style="left:576px;top:313.7px;font-size:12px;color:#fff;font-weight:bold">·具有多种绘画风格表现能力</div>
<div class="t" style="left:576px;top:334.8px;font-size:12px;color:#fff;font-weight:bold">·有较好的审美能力</div>
<div class="t" style="left:576px;top:355.9px;font-size:12px;color:#fff;font-weight:bold">·有较强的美术功底</div>
<div class="t" style="left:688px;top:423.5px;font-size:12.2px;color:#595959">数据来源：问卷调查</div></div>
<div class="t" style="left:12px;top:213px;font-size:11px;color:#e06a38;letter-spacing:.6px;-webkit-text-stroke:.2px #e06a38">27</div>
<div class="a" style="left:27px;top:303px;width:147px;height:85px;border:1px solid #c9c9c9;background:#fff;box-shadow:0 0 1px rgba(0,0,0,.15)"></div>
<div class="a" style="left:29px;top:305px;width:832px;height:467px;transform:scale(.1743);transform-origin:0 0;overflow:hidden"><div class="a" style="left:37px;top:30px;width:38px;height:38px;background:#1bb39a"></div><div class="a" style="left:49px;top:40px;width:14px;height:18px;border:3px solid #fff"></div><div class="t" style="left:93px;top:33px;font-size:28px;color:#000;font-weight:bold">相关人才需求调查及分析</div><div class="a" style="left:80px;top:68px;width:730px;height:2px;background:#1bb39a"></div><div class="a" style="left:601px;top:21px;width:194px;height:39px;background:#1bb39a;border-radius:20px"></div><div class="t" style="left:625px;top:30px;font-size:19px;color:#fff;font-weight:bold">职业素质需求分析</div><div class="a" style="left:66px;top:84px;width:434px;height:10px;background:#c8c8c8"></div>
<div class="a" style="left:102px;top:201.0px;width:45px;height:5px;background:#bbb"></div>
<div class="a" style="left:155px;top:200.0px;width:270.4px;height:7px;background:#0a90f6"></div>
<div class="a" style="left:87px;top:221.6px;width:60px;height:5px;background:#bbb"></div>
<div class="a" style="left:155px;top:220.6px;width:260.0px;height:7px;background:#0a90f6"></div>
<div class="a" style="left:102px;top:242.2px;width:45px;height:5px;background:#bbb"></div>
<div class="a" style="left:155px;top:241.2px;width:197.6px;height:7px;background:#0a90f6"></div>
<div class="a" style="left:102px;top:262.8px;width:45px;height:5px;background:#bbb"></div>
<div class="a" style="left:155px;top:261.8px;width:223.6px;height:7px;background:#0a90f6"></div>
<div class="a" style="left:102px;top:283.4px;width:45px;height:5px;background:#bbb"></div>
<div class="a" style="left:155px;top:282.4px;width:322.4px;height:7px;background:#0a90f6"></div>
<div class="a" style="left:87px;top:304.0px;width:60px;height:5px;background:#bbb"></div>
<div class="a" style="left:155px;top:303.0px;width:145.6px;height:7px;background:#0a90f6"></div>
<div class="a" style="left:102px;top:324.6px;width:45px;height:5px;background:#bbb"></div>
<div class="a" style="left:155px;top:323.6px;width:254.8px;height:7px;background:#0a90f6"></div>
<div class="a" style="left:102px;top:345.2px;width:45px;height:5px;background:#bbb"></div>
<div class="a" style="left:155px;top:344.2px;width:20.8px;height:7px;background:#0a90f6"></div>
<div class="a" style="left:155px;top:360px;width:330px;height:1px;background:#ddd"></div>
<div class="a" style="left:545px;top:120px;width:252px;height:276px;background:#8fd7c9;border-radius:42px"></div>
<div class="a" style="left:560px;top:160px;width:220px;height:6px;background:#e9f7f4"></div>
<div class="a" style="left:560px;top:181px;width:80px;height:6px;background:#e9f7f4"></div>
<div class="a" style="left:585px;top:202px;width:130px;height:6px;background:#e9f7f4"></div>
<div class="a" style="left:585px;top:223px;width:130px;height:6px;background:#e9f7f4"></div>
<div class="a" style="left:585px;top:244px;width:130px;height:6px;background:#e9f7f4"></div>
<div class="a" style="left:585px;top:265px;width:130px;height:6px;background:#e9f7f4"></div>
<div class="a" style="left:585px;top:286px;width:130px;height:6px;background:#e9f7f4"></div>
<div class="a" style="left:585px;top:307px;width:130px;height:6px;background:#e9f7f4"></div>
<div class="a" style="left:585px;top:328px;width:130px;height:6px;background:#e9f7f4"></div>
<div class="a" style="left:687px;top:425px;width:110px;height:8px;background:#bbb"></div></div>
<div class="t" style="left:12px;top:311px;font-size:11px;color:#333;letter-spacing:.6px;-webkit-text-stroke:.2px #333">28</div>
<div class="a" style="left:27px;top:401px;width:147px;height:85px;border:1px solid #c9c9c9;background:#fff;box-shadow:0 0 1px rgba(0,0,0,.15)"></div>
<div class="a" style="left:29px;top:403px;width:832px;height:467px;transform:scale(.1743);transform-origin:0 0;overflow:hidden"><div class="a" style="left:37px;top:30px;width:38px;height:38px;background:#1bb39a"></div><div class="a" style="left:49px;top:40px;width:14px;height:18px;border:3px solid #fff"></div><div class="t" style="left:93px;top:33px;font-size:28px;color:#000;font-weight:bold">相关人才需求调查及分析</div><div class="a" style="left:80px;top:68px;width:730px;height:2px;background:#1bb39a"></div><div class="a" style="left:601px;top:21px;width:194px;height:39px;background:#1bb39a;border-radius:20px"></div><div class="t" style="left:625px;top:30px;font-size:19px;color:#fff;font-weight:bold">职业素质需求分析</div><div class="a" style="left:100px;top:102px;width:175px;height:9px;background:#c8c8c8"></div>
<div class="a" style="left:115px;top:183.0px;width:132px;height:5px;background:#c4c4c4"></div>
<div class="a" style="left:258px;top:180.0px;width:172px;height:11px;background:#0a90f6"></div>
<div class="a" style="left:115px;top:227.5px;width:132px;height:5px;background:#c4c4c4"></div>
<div class="a" style="left:258px;top:224.5px;width:423px;height:11px;background:#0a90f6"></div>
<div class="a" style="left:115px;top:272.0px;width:132px;height:5px;background:#c4c4c4"></div>
<div class="a" style="left:258px;top:269.0px;width:373px;height:11px;background:#0a90f6"></div>
<div class="a" style="left:115px;top:316.5px;width:132px;height:5px;background:#c4c4c4"></div>
<div class="a" style="left:258px;top:313.5px;width:223px;height:11px;background:#0a90f6"></div>
<div class="a" style="left:258px;top:396px;width:340px;height:3px;background:repeating-linear-gradient(90deg,#bbb 0 6px,transparent 6px 40px)"></div></div>
<div class="t" style="left:12px;top:409px;font-size:11px;color:#333;letter-spacing:.6px;-webkit-text-stroke:.2px #333">29</div>
<div class="a" style="left:27px;top:499px;width:147px;height:85px;border:1px solid #c9c9c9;background:#fff;box-shadow:0 0 1px rgba(0,0,0,.15)"></div>
<div class="a" style="left:29px;top:501px;width:832px;height:467px;transform:scale(.1743);transform-origin:0 0;overflow:hidden"><div class="a" style="left:37px;top:30px;width:38px;height:38px;background:#1bb39a"></div><div class="a" style="left:49px;top:40px;width:14px;height:18px;border:3px solid #fff"></div><div class="t" style="left:93px;top:33px;font-size:28px;color:#000;font-weight:bold">相关人才需求调查及分析</div><div class="a" style="left:80px;top:68px;width:730px;height:2px;background:#1bb39a"></div><div class="a" style="left:601px;top:21px;width:194px;height:39px;background:#1bb39a;border-radius:20px"></div><div class="t" style="left:625px;top:30px;font-size:19px;color:#fff;font-weight:bold">职业素质需求分析</div></div>
<div class="t" style="left:12px;top:507px;font-size:11px;color:#333;letter-spacing:.6px;-webkit-text-stroke:.2px #333">30</div>
</div>
<div class="a" style="left:180px;top:488px;width:6px;height:70px;border-radius:3px;background:#b1b1b1"></div>
<div class="a" style="left:73px;top:661px;width:44px;height:18px;border-radius:9px;background:#d9d9d9"></div>
<svg style="left:89px;top:664px" width="13" height="13"><path d="M6.5 0v13M0 6.5h13" stroke="#aaa" stroke-width="1.2"/></svg>
<div class="a" style="left:10px;top:600px;width:120px;height:26px;border-radius:3px;background:rgba(75,77,78,.9)"></div>
<svg style="left:18px;top:606px" width="14" height="14"><circle cx="7" cy="7" r="7" fill="#eee"/><circle cx="4.8" cy="5.2" r="1" fill="#555"/><circle cx="9.2" cy="5.2" r="1" fill="#555"/><path d="M3.5 8h7a3.5 3.5 0 0 1-7 0z" fill="#555"/></svg>
<div class="a" style="left:38px;top:605px;width:1px;height:17px;background:#777"></div>
<div class="t" style="left:49px;top:607px;font-size:11px;color:#bdbdbd">说点什么...</div>
<div class="a" style="left:106px;top:605px;width:1px;height:17px;background:#777"></div>
<svg style="left:116px;top:608px" width="7" height="10"><path d="M5.5 1L1.5 5l4 4" fill="none" stroke="#eee" stroke-width="1.5"/></svg>

<div class="a" style="left:191px;top:109px;width:863px;height:540px;background:#e6e6e6"></div>
<div class="a" style="left:206px;top:145px;width:832px;height:467px;background:#fff;box-shadow:0 0 4px rgba(0,0,0,.35)"><div class="a" style="left:37px;top:30px;width:38px;height:38px;background:#1bb39a"></div>
<svg style="left:46px;top:39px" width="22" height="21"><path d="M3.5 1.5h3a2 2 0 0 1 2 2v13a2 2 0 0 1-2 2h-3a2 2 0 0 1-2-2v-13a2 2 0 0 1 2-2z" fill="none" stroke="#fff" stroke-width="2.2"/><path d="M11.5 1.5h5a2 2 0 0 1 2 2v4.5a2 2 0 0 1-1.5 2a2 2 0 0 1 1.5 2v4.5a2 2 0 0 1-2 2h-5M14 10h3" fill="none" stroke="#fff" stroke-width="2.2"/></svg>
<div class="t" style="left:93px;top:35.5px;font-size:28px;color:#0d0d0d">相关人才需求调查及分析</div>
<svg style="left:78px;top:60px" width="740" height="16"><path d="M2 8.5C6 6.5 12 4.5 16 5.5 C19 6 19 11 22 10.5 C26 10 30 6 33 6 C37 6 40 9.5 45 9.5 L 730 9.5" fill="none" stroke="#1bb39a" stroke-width="1.6"/></svg>
<div class="a" style="left:601px;top:21px;width:194px;height:39px;background:#1bb39a;border-radius:20px"></div>
<div class="t" style="left:625px;top:32px;font-size:19px;color:#fff;letter-spacing:-0.2px">职业素质需求分析</div>
<div class="t" style="left:59px;top:84px;font-size:14.3px;color:#595959">对不同动画公司员工进行问卷调查发现，此行业职业素质需求的比重如下：</div>
<div class="t" style="left:67px;top:109px;font-size:14.3px;color:#595959">(可以看出此行业对透视、造型、色彩以及空间感的掌握能力需求较高)</div>
<div class="a" style="left:91px;top:143px;width:1px;height:170px;background:#dfe3ee"></div>
<div class="a" style="left:91px;top:313px;width:456px;height:1px;background:#d9deea"></div>
<div class="t" style="right:749px;top:138.5px;font-size:9px;color:#595959">70</div>
<div class="t" style="right:749px;top:162.8px;font-size:9px;color:#595959">60</div>
<div class="t" style="right:749px;top:187.1px;font-size:9px;color:#595959">50</div>
<div class="t" style="right:749px;top:211.4px;font-size:9px;color:#595959">40</div>
<div class="t" style="right:749px;top:235.6px;font-size:9px;color:#595959">30</div>
<div class="t" style="right:749px;top:259.9px;font-size:9px;color:#595959">20</div>
<div class="t" style="right:749px;top:284.2px;font-size:9px;color:#595959">10</div>
<div class="t" style="right:749px;top:308.5px;font-size:9px;color:#595959">0</div>
<div class="a" style="left:108.0px;top:248.7px;width:18px;height:64.3px;background:#0a90f6"></div>
<div class="t" style="left:87.0px;top:235.7px;width:60px;text-align:center;font-size:9px;color:#404040">26.47%</div>
<div class="t xl" style="right:714.5px;top:316.5px">具有较强的美术功底</div>
<div class="a" style="left:158.6px;top:166.6px;width:18px;height:146.4px;background:#0a90f6"></div>
<div class="t" style="left:137.6px;top:153.6px;width:60px;text-align:center;font-size:9px;color:#404040">60.29%</div>
<div class="t xl" style="right:664.0px;top:316.5px">对剧本要求有很好的理解能力</div>
<div class="a" style="left:209.1px;top:173.7px;width:18px;height:139.3px;background:#0a90f6"></div>
<div class="t" style="left:188.1px;top:160.7px;width:60px;text-align:center;font-size:9px;color:#404040">57.35%</div>
<div class="t xl" style="right:613.4px;top:316.5px">熟练操作各项软件的能力</div>
<div class="a" style="left:259.6px;top:205.9px;width:18px;height:107.1px;background:#0a90f6"></div>
<div class="t" style="left:238.6px;top:192.9px;width:60px;text-align:center;font-size:9px;color:#404040">44.12%</div>
<div class="t xl" style="right:562.9px;top:316.5px">具备多种绘画风格的表现能力</div>
<div class="a" style="left:310.2px;top:177.3px;width:18px;height:135.7px;background:#0a90f6"></div>
<div class="t" style="left:289.2px;top:164.3px;width:60px;text-align:center;font-size:9px;color:#404040">55.88%</div>
<div class="t xl" style="right:512.3px;top:316.5px">有较好的创意思维</div>
<div class="a" style="left:360.8px;top:155.8px;width:18px;height:157.2px;background:#0a90f6"></div>
<div class="t" style="left:339.8px;top:160.3px;width:60px;text-align:center;font-size:9px;color:#9aa0a6;text-shadow:0.5px 0 0 #333,-0.5px 0 0 #333,0 0.5px 0 #333,0 -0.5px 0 #333">64.71%</div>
<div class="t xl" style="right:461.8px;top:316.5px">对透视、造型、色彩等方面有较好的掌握能力</div>
<div class="a" style="left:411.3px;top:234.4px;width:18px;height:78.6px;background:#0a90f6"></div>
<div class="t" style="left:390.3px;top:221.4px;width:60px;text-align:center;font-size:9px;color:#404040">32.35%</div>
<div class="t xl" style="right:411.2px;top:316.5px">有较好的审美能力</div>
<div class="a" style="left:461.8px;top:155.8px;width:18px;height:157.2px;background:#0a90f6"></div>
<div class="t" style="left:440.8px;top:160.3px;width:60px;text-align:center;font-size:9px;color:#9aa0a6;text-shadow:0.5px 0 0 #333,-0.5px 0 0 #333,0 0.5px 0 #333,0 -0.5px 0 #333">64.71%</div>
<div class="t xl" style="right:360.7px;top:316.5px">空间感较强</div>
<div class="a" style="left:512.4px;top:309.5px;width:18px;height:3.5px;background:#0a90f6"></div>
<div class="t" style="left:491.4px;top:296.5px;width:60px;text-align:center;font-size:9px;color:#404040">0%</div>
<div class="t xl" style="right:310.1px;top:316.5px">其它</div>
<div class="a" style="left:551px;top:124px;width:258px;height:284px;background:#8fd7c9;border-radius:42px"></div>
<div class="t" style="left:560px;top:166.0px;font-size:12px;color:#fff;font-weight:bold">根据左侧图表可以总结动画场景设计人才所需</div>
<div class="t" style="left:560px;top:187.1px;font-size:12px;color:#fff;font-weight:bold">要具备的职业素质为以下几点：</div>
<div class="t" style="left:576px;top:208.2px;font-size:12px;color:#fff;font-weight:bold">·较强的透视、造型、色彩掌握能力</div>
<div class="t" style="left:576px;top:229.3px;font-size:12px;color:#fff;font-weight:bold">·较强的空间感</div>
<div class="t" style="left:576px;top:250.4px;font-size:12px;color:#fff;font-weight:bold">·对剧本有较高的理解能力</div>
<div class="t" style="left:576px;top:271.5px;font-size:12px;color:#fff;font-weight:bold">·熟练操作各项软件</div>
<div class="t" style="left:576px;top:292.6px;font-size:12px;color:#fff;font-weight:bold">·有较强的创意思维</div>
<div class="t" style="left:576px;top:313.7px;font-size:12px;color:#fff;font-weight:bold">·具有多种绘画风格表现能力</div>
<div class="t" style="left:576px;top:334.8px;font-size:12px;color:#fff;font-weight:bold">·有较好的审美能力</div>
<div class="t" style="left:576px;top:355.9px;font-size:12px;color:#fff;font-weight:bold">·有较强的美术功底</div>
<div class="t" style="left:688px;top:423.5px;font-size:12.2px;color:#595959">数据来源：问卷调查</div></div>
<div class="a" style="left:1054px;top:109px;width:12px;height:552px;background:#dedede"></div>
<svg style="left:1056px;top:117px" width="9" height="5"><path d="M1 4.5h7L4.5 1z" fill="#8a8a8a"/></svg>
<div class="a" style="left:1054px;top:452px;width:11px;height:36px;border-radius:5px;background:#f7f7f7;border:1px solid #c8c8c8"></div>
<svg style="left:1056px;top:606px" width="9" height="5"><path d="M1 0.5h7L4.5 4z" fill="#8a8a8a"/></svg>
<svg style="left:1056px;top:618px" width="9" height="26"><path d="M4.5 1L8 4.5H1zM4.5 4.5L8 8H1zM1 18h7l-3.5 3.5zM1 21.5h7L4.5 25z" fill="#8a8a8a"/></svg>
<div class="a" style="left:191px;top:649px;width:863px;height:12px;background:#dedede"></div>
<svg style="left:197px;top:652px" width="5" height="8"><path d="M4.5 0.5L.5 4 4.5 7.5z" fill="#8a8a8a"/></svg>
<div class="a" style="left:207px;top:649px;width:819px;height:12px;border-radius:6px;background:#f5f5f5;border:1px solid #c8c8c8"></div>
<svg style="left:1044px;top:652px" width="5" height="8"><path d="M0.5 0.5L4.5 4 .5 7.5z" fill="#8a8a8a"/></svg>
<div class="a" style="left:191px;top:661px;width:875px;height:24px;background:#e9e9e9"></div>
<svg style="left:197px;top:666px" width="14" height="14"><path d="M1 .5h12v10H4l-3 3z" fill="none" stroke="#555" stroke-width="1.1"/><path d="M4 4h6M4 7h6" stroke="#555"/></svg>
<div class="t" style="left:216px;top:667px;font-size:12px;color:#444">单击此处添加备注</div>

<div class="a" style="left:1066px;top:109px;width:263px;height:576px;background:#f3f3f3;border-left:1px solid #dcdcdc"></div>
<div class="t" style="left:1072px;top:117px;font-size:11px;color:#333">对象属性</div>
<svg style="left:1080px;top:137px" width="18" height="17"><path d="M8 1l7 7-6 7-7-7z M3 3.5h7" fill="none" stroke="#444" stroke-width="1.2"/><rect x="15" y="8" width="2" height="8" fill="#5a9af2"/></svg>
<div class="t" style="left:1078px;top:160px;font-size:11px;color:#e06a2c;font-weight:bold">填充</div>
<div class="a" style="left:1066px;top:177px;width:263px;height:1px;background:#e2e2e2"></div>
<div class="a" style="left:1074px;top:176px;width:28px;height:2px;background:#e06a2c"></div>
<svg style="left:1075px;top:199px" width="6" height="6"><path d="M5.5 .5V5.5H.5z" fill="#e06a2c"/></svg>
<div class="t" style="left:1084px;top:196px;font-size:11px;color:#e06a2c;font-weight:bold">填充</div>
<div class="a" style="left:1084px;top:223px;width:12px;height:12px;border-radius:50%;border:1px solid #999;background:#fff"></div>
<div class="a" style="left:1087px;top:226px;width:6px;height:6px;border-radius:50%;background:#c8693a"></div>
<div class="t" style="left:1099px;top:223px;font-size:11px;color:#444">纯色</div>
<div class="a" style="left:1084px;top:243px;width:12px;height:12px;border-radius:50%;border:1px solid #999;background:#fff"></div>
<div class="t" style="left:1099px;top:243px;font-size:11px;color:#444">渐变</div>
<div class="a" style="left:1084px;top:263px;width:12px;height:12px;border-radius:50%;border:1px solid #999;background:#fff"></div>
<div class="t" style="left:1099px;top:263px;font-size:11px;color:#444">图片</div>
<div class="a" style="left:1084px;top:283px;width:12px;height:12px;border-radius:50%;border:1px solid #999;background:#fff"></div>
<div class="t" style="left:1099px;top:283px;font-size:11px;color:#444">图案</div>
<div class="a" style="left:1084px;top:303px;width:12px;height:12px;border:1px solid #999;background:#fff;border-radius:1px"></div>
<div class="t" style="left:1099px;top:303px;font-size:11px;color:#444">隐藏</div>
<div class="t" style="left:1082px;top:345px;font-size:11px;color:#444">颜色(C)</div>
<div class="t" style="left:1082px;top:373px;font-size:11px;color:#444">透明度</div>
<div class="a" style="left:1066px;top:650px;width:225px;height:35px;background:#efefef"></div>
<div class="a" style="left:1291px;top:650px;width:34px;height:35px;background:#e6e6e6"></div>
<div class="a" style="left:1074px;top:655px;width:50px;height:22px;background:#fff;border:1px solid #cfcfcf"></div>
<div class="t" style="left:1078px;top:660px;font-size:11px;color:#555">全部应用</div>
<div class="a" style="left:1129px;top:655px;width:49px;height:22px;background:#f0f0f0;border:1px solid #dcdcdc"></div>
<div class="t" style="left:1133px;top:660px;font-size:11px;color:#c8c8c8">重置背景</div>
<svg style="left:1184px;top:660px" width="14" height="14"><circle cx="7" cy="7" r="6.3" fill="none" stroke="#999" stroke-width="1.1"/><path d="M5.5 4v6l4.5-3z" fill="#f07a3a"/></svg>
<div class="t" style="left:1202px;top:661.5px;font-size:11px;color:#3b8ff0">操作技巧</div>
<svg style="left:1304px;top:663px" width="13" height="13"><g fill="none" stroke="#555" stroke-width="1.3"><rect x="1" y="1" width="4.5" height="4.5" rx="1.5"/><rect x="7.5" y="1" width="4.5" height="4.5" rx="1.5"/><rect x="1" y="7.5" width="4.5" height="4.5" rx="1.5"/><rect x="7.5" y="7.5" width="4.5" height="4.5" rx="1.5"/></g></svg>

<div class="a" style="left:0;top:685px;width:1329px;height:29px;background:#f3f3f3;border-top:1px solid #e0e0e0"></div>
<div class="a" style="left:0;top:712px;width:1329px;height:2px;background:#dfe6ee"></div>
<div class="t" style="left:8px;top:694px;font-size:11px;color:#555">幻灯片 27 / 36</div>
<div class="a" style="left:86px;top:689px;width:1px;height:20px;background:#e0e0e0"></div>
<div class="t" style="left:94px;top:694px;font-size:11px;color:#555">第一PPT，www.1ppt.com</div>
<div class="a" style="left:230px;top:689px;width:1px;height:20px;background:#e0e0e0"></div>
<div class="t" style="left:241px;top:693px;font-size:12px;color:#555;font-family:'Liberation Serif',serif">T</div><div class="t" style="left:248px;top:697px;font-size:8px;color:#555">?</div>
<div class="t" style="left:256px;top:694px;font-size:11px;color:#555">缺失字体</div>
<div class="a" style="left:307px;top:689px;width:1px;height:20px;background:#e0e0e0"></div>
<svg style="left:939px;top:694px" width="14" height="11"><path d="M0 1h12M0 4h12M0 7h12M0 10h7" stroke="#555" stroke-width="1.1"/></svg><div class="a" style="left:953.5px;top:700.7px;width:0;height:0;border-left:1.7px solid transparent;border-right:1.7px solid transparent;border-top:2.0px solid #555"></div>
<div class="a" style="left:965px;top:689px;width:20px;height:21px;background:#cbcbcb;border-radius:2px"></div>
<svg style="left:968px;top:693px" width="14" height="14"><rect x=".7" y=".7" width="12.6" height="12.6" rx="1.5" fill="none" stroke="#444" stroke-width="1.3"/><path d="M4 1v12M4 10h9" stroke="#444" stroke-width="1.3"/></svg>
<svg style="left:990px;top:692px" width="15" height="14"><g fill="none" stroke="#666" stroke-width="1.2"><rect x="1" y="1" width="5" height="5" rx="1.5"/><rect x="8.5" y="1" width="5" height="5" rx="1.5"/><rect x="1" y="8" width="5" height="5" rx="1.5"/><rect x="8.5" y="8" width="5" height="5" rx="1.5"/></g></svg>
<svg style="left:1012px;top:692px" width="14" height="14"><path d="M.7 1.5h12.6v11H.7zM7 1.5v11" fill="none" stroke="#aaa" stroke-width="1.2"/></svg>
<div class="a" style="left:1072.5px;top:699.7px;width:0;height:0;border-left:1.7px solid transparent;border-right:1.7px solid transparent;border-top:2.0px solid #777"></div>
<div class="t" style="left:1090px;top:694px;font-size:11px;color:#666">101%</div><div class="a" style="left:1122.5px;top:699.7px;width:0;height:0;border-left:1.7px solid transparent;border-right:1.7px solid transparent;border-top:2.0px solid #777"></div>
<div class="a" style="left:1135px;top:699px;width:10px;height:1.5px;background:#444"></div>
<div class="a" style="left:1155px;top:699px;width:118px;height:1px;background:#aaa"></div>
<div class="a" style="left:1207px;top:694px;width:11px;height:11px;border-radius:50%;background:#fff;border:1.3px solid #555"></div>
<svg style="left:1283px;top:694px" width="11" height="11"><path d="M5.5 0v11M0 5.5h11" stroke="#444" stroke-width="1.5"/></svg>
<svg style="left:1305px;top:694px" width="12" height="12"><path d="M0 3.5V0h3.5M8.5 0H12v3.5M12 8.5V12H8.5M3.5 12H0V8.5" fill="none" stroke="#666" stroke-width="1.2"/><circle cx="6" cy="6" r="1" fill="#666"/></svg>

<div class="a" style="left:1114px;top:33px;width:211px;height:625px;background:#2b2e31;border-left:1px solid #141516;border-bottom:1px solid #141516"></div>
<div class="a" style="left:1115px;top:33px;width:210px;height:31px;background:#2a2d30"></div>
<svg style="left:1123px;top:41px" width="14" height="15"><rect x="4" y="0.5" width="6" height="9" rx="3" fill="#bbb"/><path d="M2 7a5 5 0 0 0 10 0M7 12v2.5M4.5 14.5h5" fill="none" stroke="#bbb" stroke-width="1.1"/><path d="M1 14L13 2" stroke="#e83c3c" stroke-width="1.4"/></svg>
<div class="a" style="left:1145px;top:40px;width:1px;height:17px;background:#1c1e20"></div>
<div class="t" style="left:1153px;top:43px;font-size:11px;letter-spacing:-0.6px;color:#eee">正在讲话: 王佩环;</div>
<svg style="left:1270px;top:33px" width="50" height="30"><path d="M6 18L17.5 5.5Q18.5 4.5 19.5 5.5L25 11.3 19 18.5 12.3 24.3Q11.3 25.3 10.3 24.3z" fill="#46494d"/><path d="M19 18.5L30 6.5Q31 5.5 32 6.5L44.5 18 40.5 24.3Q39.5 25.3 38.5 24.3L32.4 18.5 26.2 24.3Q25.2 25.3 24.2 24.3z" fill="#45484c"/></svg>
<div class="a" style="left:1115px;top:64px;width:210px;height:2px;background:#111"></div>
<svg style="left:1191px;top:85px" width="58" height="58"><defs><clipPath id="c0"><circle cx="29" cy="29" r="29"/></clipPath></defs><g clip-path="url(#c0)"><rect width="58" height="58" fill="#8e8d92"/><rect x="36" y="0" width="22" height="22" fill="#6f6e73"/><path d="M42 4L44 22" stroke="#2e2e30" stroke-width="1.5"/><path d="M1 30C6 27 12 28 16 30L20 24C30 22 40 20 50 16C58 14 60 22 56 28C52 32 52 38 54 44C54 52 48 58 40 60L8 60C4 54 6 46 10 42C4 42 0 36 1 30z" fill="#e9e6e8"/><circle cx="23" cy="22" r="9.5" fill="#eeecee"/><path d="M13.5 16C14 6 31 5 32.5 15z" fill="#cf7aa0"/><rect x="19" y="11" width="7" height="3" fill="#3b3566"/><circle cx="19" cy="6" r="2" fill="#d03030"/><circle cx="24.5" cy="23" r="1.3" fill="#c0603a"/><circle cx="21" cy="20" r=".7" fill="#222"/><circle cx="28" cy="20" r=".7" fill="#222"/><path d="M14 27C20 31 28 30 34 24L37 30C35 36 38 44 35 52L30 57C27 48 25 40 22 34C19 37 16 34 14 27z" fill="#5b2b2d"/><path d="M22 36L32 52M26 33L28 48M18 30l10 2" stroke="#9a5a4a" stroke-width="0.9"/></g></svg>
<div class="a" style="left:1115px;top:162px;width:47px;height:21px;background:#131415"></div>
<svg style="left:1117px;top:165px" width="14" height="15"><rect x="4" y="0.5" width="6" height="9" rx="3" fill="#fff"/><path d="M2 7a5 5 0 0 0 10 0M7 12v2.5M4.5 14.5h5" fill="none" stroke="#fff" stroke-width="1.1"/><path d="M1 14L13 2" stroke="#e83c3c" stroke-width="1.4"/></svg>
<div class="t" style="left:1131px;top:166px;font-size:14px;color:#f2f2f2;">赵萌</div>
<div class="a" style="left:1115px;top:183px;width:210px;height:1px;background:#141618"></div>
<svg style="left:1191px;top:203px" width="58" height="58"><defs><clipPath id="c1"><circle cx="29" cy="29" r="29"/></clipPath></defs><g clip-path="url(#c1)"><rect width="58" height="58" fill="#151515"/><path d="M0 8C20 6 40 14 58 24V44C40 36 20 30 0 26z" fill="#2b1112"/><path d="M6 12L24 16L24 22L6 18z" fill="#a8222a"/><path d="M8 14.5L23 18" stroke="#ffd6d6" stroke-width="1.6"/><path d="M26 17L56 25L56 31L26 23z" fill="#b52a30"/><path d="M28 20L55 27.5" stroke="#ffe4e4" stroke-width="2"/><path d="M8 22L24 26L24 29L8 25z" fill="#d05a5a"/><path d="M28 30L54 36L54 40L28 34z" fill="#a82a2e"/><path d="M30 32.5L52 37.5" stroke="#f7c4c4" stroke-width="1.3"/><path d="M4 6C3 9 6 10 7 8" stroke="#eee" stroke-width="1.2" fill="none"/><path d="M14 34L46 46M12 38L44 50M22 30v20" stroke="#3a1214" stroke-width="1.5"/></g></svg>
<div class="a" style="left:1115px;top:280px;width:100px;height:21px;background:#131415"></div>
<svg style="left:1117px;top:283px" width="14" height="15"><rect x="4" y="0.5" width="6" height="9" rx="3" fill="#fff"/><path d="M2 7a5 5 0 0 0 10 0M7 12v2.5M4.5 14.5h5" fill="none" stroke="#fff" stroke-width="1.1"/><path d="M1 14L13 2" stroke="#e83c3c" stroke-width="1.4"/></svg>
<div class="t" style="left:1131px;top:284px;font-size:14px;color:#f2f2f2;letter-spacing:.7px;top:285px">Wuq1ongyy</div>
<div class="a" style="left:1115px;top:302px;width:210px;height:1px;background:#141618"></div>
<svg style="left:1191px;top:322px" width="58" height="58"><defs><clipPath id="c2"><circle cx="29" cy="29" r="29"/></clipPath></defs><g clip-path="url(#c2)"><rect width="58" height="58" fill="#d4503e"/><path d="M40 0H58V58H40z" fill="#e7816f"/><path d="M42 26l8 -4M40 36h14M47 30v16M42 46l10 6M44 52l4 6" stroke="#f6dcd2" stroke-width="3"/><path d="M40 2C46 2 54 8 54 14L46 20 40 14z" fill="#f1c3bb"/><path d="M6 14C6 6 14 2 22 2C30 2 32 8 32 14C32 24 26 28 18 28C10 28 6 22 6 14z" fill="#f3ede6"/><circle cx="19" cy="13" r="3.6" fill="#ead44a"/><circle cx="19" cy="13" r="1.3" fill="#6a8a3a"/><path d="M32 28C32 21 38 18 44 18C50 18 54 23 54 29C54 35 48 39 42 39C36 39 32 34 32 28z" fill="#f0b7ad"/><circle cx="41" cy="28" r="3.4" fill="#e8d45a"/><path d="M29 34C26 37 25 44 25 52L26 58L35 58L36 50C36 42 34 37 32 34z" fill="#2a2632"/><path d="M28 40L29 56" stroke="#4a5a7a" stroke-width="1"/><path d="M0 50L20 46L24 58H0z" fill="#e0715e"/></g></svg>
<div class="a" style="left:1116px;top:302px;width:208px;height:118.5px;border:1.5px solid #1e9a55"></div>
<div class="a" style="left:1117px;top:399px;width:21px;height:20px;background:#fb7d1c"></div>
<svg style="left:1121px;top:402px" width="12" height="12"><circle cx="6" cy="3.5" r="3" fill="#fff"/><path d="M0 12a6 5 0 0 1 12 0z" fill="#fff"/></svg>
<div class="a" style="left:1138px;top:399px;width:60px;height:20px;background:#131415"></div>
<svg style="left:1139px;top:401px" width="12" height="15"><rect x="3" y="0.5" width="6" height="9" rx="3" fill="#4ee84c"/><path d="M1 7a5 5 0 0 0 10 0M6 12v2.5M3.5 14.5h5" fill="none" stroke="#fff" stroke-width="1.1"/></svg>
<div class="t" style="left:1153px;top:403px;font-size:14px;color:#f2f2f2">王佩环</div>
<div class="a" style="left:1115px;top:420px;width:210px;height:1px;background:#141618"></div>
<svg style="left:1191px;top:440px" width="58" height="58"><defs><clipPath id="c3"><circle cx="29" cy="29" r="29"/></clipPath></defs><g clip-path="url(#c3)"><rect width="58" height="58" fill="#9aab9c"/><rect x="0" y="28" width="58" height="30" fill="#b08f45"/><path d="M0 22C10 18 20 26 30 22S50 18 58 24V30H0z" fill="#87998c"/><path d="M15 58C12 36 12 14 20 8C28 0 42 2 46 12C52 26 50 44 48 58z" fill="#553a26"/><ellipse cx="28" cy="26" rx="11" ry="14" fill="#e9c3a9"/><ellipse cx="25" cy="24" rx="1.6" ry="1" fill="#3a2a22"/><ellipse cx="35" cy="24" rx="1.6" ry="1" fill="#3a2a22"/><ellipse cx="29" cy="32" rx="2.5" ry="1.5" fill="#d97a7a"/><path d="M4 58C8 44 18 38 28 40C40 40 50 44 56 58z" fill="#4d4e57"/><path d="M18 58C20 52 30 50 38 58z" fill="#d8ae8e"/><path d="M10 50C8 54 6 56 6 58H16z" fill="#8a5a32"/></g></svg>
<div class="a" style="left:1115px;top:517px;width:61px;height:21px;background:#131415"></div>
<svg style="left:1117px;top:520px" width="14" height="15"><rect x="4" y="0.5" width="6" height="9" rx="3" fill="#fff"/><path d="M2 7a5 5 0 0 0 10 0M7 12v2.5M4.5 14.5h5" fill="none" stroke="#fff" stroke-width="1.1"/><path d="M1 14L13 2" stroke="#e83c3c" stroke-width="1.4"/></svg>
<div class="t" style="left:1131px;top:521px;font-size:14px;color:#f2f2f2;">樊思思</div>
<div class="a" style="left:1115px;top:539px;width:210px;height:1px;background:#141618"></div>
<svg style="left:1191px;top:559px" width="58" height="58"><defs><clipPath id="c4"><circle cx="29" cy="29" r="29"/></clipPath></defs><g clip-path="url(#c4)"><rect width="58" height="58" fill="#6a6c23"/><rect x="0" y="0" width="58" height="14" fill="#556018"/><path d="M46 8C50 6 56 12 54 16L44 16z" fill="#b0562a"/><path d="M4 58C0 40 4 20 12 12C20 6 30 8 32 16C34 28 34 40 36 58z" fill="#f0c49f"/><path d="M6 16C10 8 26 6 32 14C26 12 14 12 6 18z" fill="#e9d882"/><path d="M10 30C14 24 24 24 30 28C26 30 20 32 10 30z" fill="#e8c75a"/><circle cx="17" cy="20" r="2" fill="#fff"/><circle cx="24" cy="20" r="2" fill="#fff"/><ellipse cx="24" cy="32" rx="2" ry="1.6" fill="#222"/><path d="M2 46C10 42 26 42 36 48L38 58H0z" fill="#efe8d2"/><path d="M6 46C4 52 6 56 8 58" stroke="#2a7a3a" stroke-width="1.5" fill="none"/><circle cx="45" cy="36" r="15" fill="#8a4f2c"/><circle cx="38" cy="20" r="3" fill="#8a4f2c"/><circle cx="52" cy="20" r="3" fill="#8a4f2c"/><circle cx="40" cy="34" r="4" fill="#fff"/><circle cx="47" cy="36" r="4" fill="#fff"/><circle cx="41" cy="33" r="1.3" fill="#222"/><circle cx="48" cy="34" r="1.3" fill="#222"/><ellipse cx="42" cy="43" rx="4" ry="2" fill="#5a2a1a"/><rect x="8" y="51" width="42" height="5" fill="#c8c8c0"/><path d="M10 53h38" stroke="#555" stroke-width="1" stroke-dasharray="2 1"/></g></svg>
<div class="a" style="left:1115px;top:636px;width:61px;height:21px;background:#131415"></div>
<svg style="left:1117px;top:639px" width="14" height="15"><rect x="4" y="0.5" width="6" height="9" rx="3" fill="#fff"/><path d="M2 7a5 5 0 0 0 10 0M7 12v2.5M4.5 14.5h5" fill="none" stroke="#fff" stroke-width="1.1"/><path d="M1 14L13 2" stroke="#e83c3c" stroke-width="1.4"/></svg>
<div class="t" style="left:1131px;top:640px;font-size:14px;color:#f2f2f2;">夏文达</div>
<div class="a" style="left:1188px;top:74px;width:63px;height:17px;border-radius:2px;background:rgba(30,30,32,.75)"></div>
<svg style="left:1213px;top:78px" width="12" height="8"><path d="M1 7l5-5 5 5" fill="none" stroke="#ccc" stroke-width="1.3"/></svg>
<div class="a" style="left:1189px;top:628px;width:61px;height:17px;border-radius:2px;background:#1f2123"></div>
<svg style="left:1214px;top:633px" width="12" height="8"><path d="M1 1l5 5 5-5" fill="none" stroke="#eee" stroke-width="1.5"/></svg>
<div class="a" style="left:1325px;top:82px;width:4px;height:60px;background:#fff"></div>
<div class="a" style="left:1323px;top:99px;width:6px;height:42px;border-radius:3px;border:1px solid #999;background:#f5f5f5"></div>
<div class="a" style="left:1324px;top:120px;width:4px;height:20px;border-radius:2px;background:#3ec36e"></div>

<!-- green share border -->
<div class="a" style="left:0;top:0;width:83px;height:4px;background:#07d07a"></div>
<div class="a" style="left:0;top:0;width:4px;height:83px;background:#07d07a"></div>
<div class="a" style="left:1246px;top:0;width:83px;height:4px;background:#07d07a"></div>
<div class="a" style="left:1325px;top:0;width:4px;height:82px;background:#07d07a"></div>
<div class="a" style="left:0;top:664px;width:4px;height:50px;background:#07d07a"></div>
<div class="a" style="left:1325px;top:664px;width:4px;height:50px;background:#07d07a"></div>
</body></html>
